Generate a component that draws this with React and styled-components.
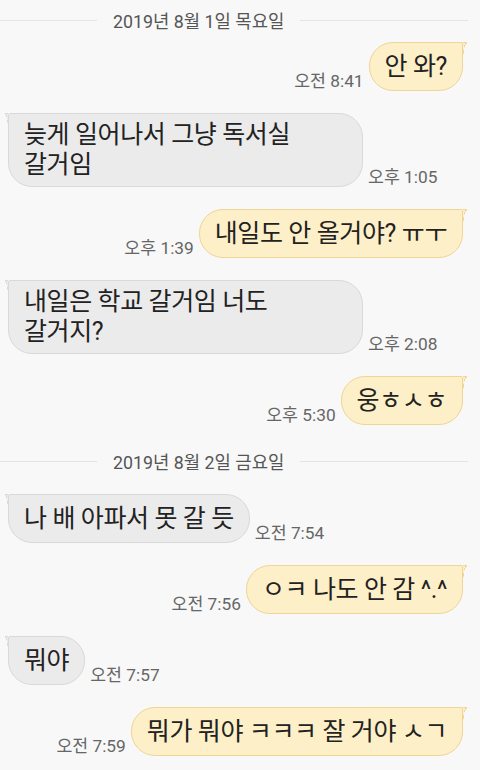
import React from "react";
import styled, { createGlobalStyle, css } from "styled-components";

const GlobalStyle = createGlobalStyle`
  html, body { margin: 0; padding: 0; background: #f8f8f8; }
  body { font-family: Roboto, "Noto Sans CJK KR", sans-serif; }
`;

const Screen = styled.div`
  width: 480px;
  height: 770px;
  overflow: hidden;
  background: #f8f8f8;
  display: flex;
  flex-direction: column;
  padding: 8px 17px 0 8px;
  box-sizing: border-box;
`;

const DateRow = styled.div`
  display: flex;
  align-items: center;
  gap: 16px;
  height: 24px;
  margin: ${(p) => p.$margin};
  margin-left: -8px;
  margin-right: -5px;
  color: #555;
  font-size: 17.8px;
  white-space: nowrap;
  flex-shrink: 0;
  &::before, &::after {
    content: "";
    height: 1px;
    background: #e4e4e4;
  }
  &::before {
    flex: 0 0 97px;
  }
  &::after {
    flex: 1;
  }
`;

const Row = styled.div`
  display: flex;
  align-items: flex-end;
  gap: 5px;
  margin-top: 22px;
  flex-shrink: 0;
  justify-content: ${(p) => (p.$sent ? "flex-end" : "flex-start")};
`;

const Time = styled.span`
  color: #666;
  font-size: 17.3px;
  line-height: 20px;
  margin-bottom: 0;
  white-space: nowrap;
  flex-shrink: 0;
`;

const sentColors = { fill: "#fdefc7", line: "#efd596" };
const recvColors = { fill: "#ebebeb", line: "#d9d9d9" };

const Bubble = styled.div`
  position: relative;
  display: flex;
  align-items: center;
  max-width: 355px;
  min-height: 49px;
  box-sizing: border-box;
  padding: 6px 15px;
  font-size: 25px;
  line-height: 30px;
  letter-spacing: -0.4px;
  color: #222;
  word-break: keep-all;
  background: ${(p) => (p.$sent ? sentColors.fill : recvColors.fill)};
  border: 1px solid ${(p) => (p.$sent ? sentColors.line : recvColors.line)};
  ${(p) =>
    p.$sent
      ? css`
          border-radius: 24px 2px 24px 24px;
          &::after {
            content: "";
            position: absolute;
            top: -1px;
            right: -5px;
            width: 4px;
            height: 15px;
            background:
              linear-gradient(${sentColors.line}, ${sentColors.line}) top / 100% 1px no-repeat,
              radial-gradient(4px 15px at 100% 100%, transparent 0 88%, ${sentColors.line} 92% 100%, ${sentColors.fill} 100%);
          }
        `
      : css`
          border-radius: 2px 24px 24px 24px;
          &::after {
            content: "";
            position: absolute;
            top: -1px;
            left: -4px;
            width: 3px;
            height: 15px;
            background:
              linear-gradient(${recvColors.line}, ${recvColors.line}) top / 100% 1px no-repeat,
              radial-gradient(3px 15px at 0% 100%, transparent 0 88%, ${recvColors.line} 92% 100%, ${recvColors.fill} 100%);
          }
        `}
`;

const items = [
  { type: "date", text: "2019년 8월 1일 목요일", margin: "0 0 -12px" },
  { type: "msg", sent: true, text: "안 와?", time: "오전 8:41" },
  { type: "msg", sent: false, text: "늦게 일어나서 그냥 독서실 갈거임", time: "오후 1:05" },
  { type: "msg", sent: true, text: "내일도 안 올거야? ㅠㅜ", time: "오후 1:39" },
  { type: "msg", sent: false, text: "내일은 학교 갈거임 너도 갈거지?", time: "오후 2:08" },
  { type: "msg", sent: true, text: "웅ㅎㅅㅎ", time: "오후 5:30" },
  { type: "date", text: "2019년 8월 2일 금요일", margin: "24px 0 -1px" },
  { type: "msg", sent: false, text: "나 배 아파서 못 갈 듯", time: "오전 7:54" },
  { type: "msg", sent: true, text: "ㅇㅋ 나도 안 감 ^.^", time: "오전 7:56" },
  { type: "msg", sent: false, text: "뭐야", time: "오전 7:57" },
  { type: "msg", sent: true, text: "뭐가 뭐야 ㅋㅋㅋ 잘 거야 ㅅㄱ", time: "오전 7:59" },
];

export default function App() {
  return (
    <>
      <GlobalStyle />
      <Screen>
        {items.map((it, i) =>
          it.type === "date" ? (
            <DateRow key={i} $margin={it.margin}>{it.text}</DateRow>
          ) : (
            <Row key={i} $sent={it.sent}>
              {it.sent && <Time>{it.time}</Time>}
              <Bubble $sent={it.sent}>{it.text}</Bubble>
              {!it.sent && <Time>{it.time}</Time>}
            </Row>
          )
        )}
      </Screen>
    </>
  );
}
